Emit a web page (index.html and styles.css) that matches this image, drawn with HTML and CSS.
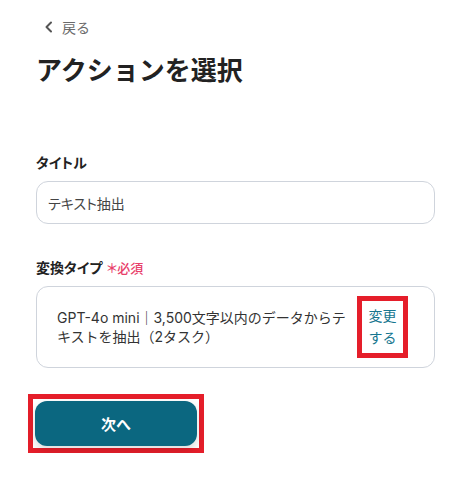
FILE: index.html
```html
<!DOCTYPE html>
<html lang="ja">
<head>
<meta charset="utf-8">
<link rel="stylesheet" href="styles.css">
</head>
<body>
<main class="page">
  <a class="back" href="#">
    <svg class="back-icon" width="10" height="12" viewBox="0 0 10 12"><path d="M7 1.5 L2.5 6 L7 10.5" fill="none" stroke="#555" stroke-width="2" stroke-linecap="round" stroke-linejoin="round"/></svg>
    <span>戻る</span>
  </a>
  <h1 class="title">アクションを選択</h1>

  <section class="field field-title">
    <label class="label">タイトル</label>
    <div class="input">テキスト抽出</div>
  </section>

  <section class="field field-type">
    <label class="label">変換タイプ <span class="req">＊必須</span></label>
    <div class="select-box">
      <p class="select-text">GPT-4o mini｜3,500文字以内のデータからテキストを抽出（2タスク）</p>
      <div class="mark mark-link"><a class="change" href="#">変更<br>する</a></div>
    </div>
  </section>

  <div class="mark mark-btn"><button class="next">次へ</button></div>
</main>
</body>
</html>
```

FILE: styles.css
```css
* { box-sizing: border-box; }
html, body { margin: 0; padding: 0; background: #fff; }
body {
  font-family: "Inter", "Noto Sans CJK JP", sans-serif;
  color: #333;
}
.page {
  width: 466px;
  padding: 15px 31px 0 36px;
}
.back {
  display: flex;
  align-items: center;
  gap: 8px;
  margin-left: 8px;
  height: 24px;
  font-size: 14px;
  color: #6b6b6b;
  text-decoration: none;
}
.back-icon { display: block; }
.title {
  margin: 11px 0 0;
  font-family: "Noto Sans CJK JP", sans-serif;
  font-size: 26px;
  line-height: 38px;
  font-weight: 700;
  color: #222;
}
.field-title { margin-top: 65px; }
.field-type { margin-top: 34px; }
.label {
  display: block;
  font-size: 14px;
  line-height: 20px;
  font-weight: 700;
  color: #222;
  margin-bottom: 8px;
  font-feature-settings: "palt";
}
.req {
  color: #e8406a;
  font-size: 13px;
  font-weight: 500;
  margin-left: 1px;
}
.input {
  height: 43px;
  border: 1px solid #cfd4dc;
  border-radius: 12px;
  padding: 0 11px;
  display: flex;
  align-items: center;
  font-size: 14px;
  color: #444;
  font-feature-settings: "palt";
}
.select-box {
  height: 82px;
  border: 1px solid #cfd4dc;
  border-radius: 12px;
  display: flex;
  align-items: center;
  padding: 0 26px 0 20px;
}
.select-text {
  margin: 0;
  flex: 1;
  font-size: 14px;
  line-height: 19px;
  color: #333;
}
.mark {
  border: 5px solid #e51e2a;
  padding: 2px;
  flex-shrink: 0;
}
.mark-link {
  width: 51px;
  height: 62px;
  display: flex;
  align-items: center;
  justify-content: center;
  margin-left: 8px;
}
.change {
  font-size: 14px;
  line-height: 22px;
  color: #17768f;
  text-decoration: none;
}
.mark-btn {
  margin: 26px 0 0 -8px;
  width: 176px;
  height: 59px;
}
.next {
  width: 100%;
  height: 100%;
  border: 0;
  border-radius: 12px;
  background: #0b6780;
  color: #fff;
  font-family: inherit;
  font-size: 15px;
  font-weight: 700;
  box-shadow: 0 4px 10px rgba(0,0,0,0.15);
}
```
